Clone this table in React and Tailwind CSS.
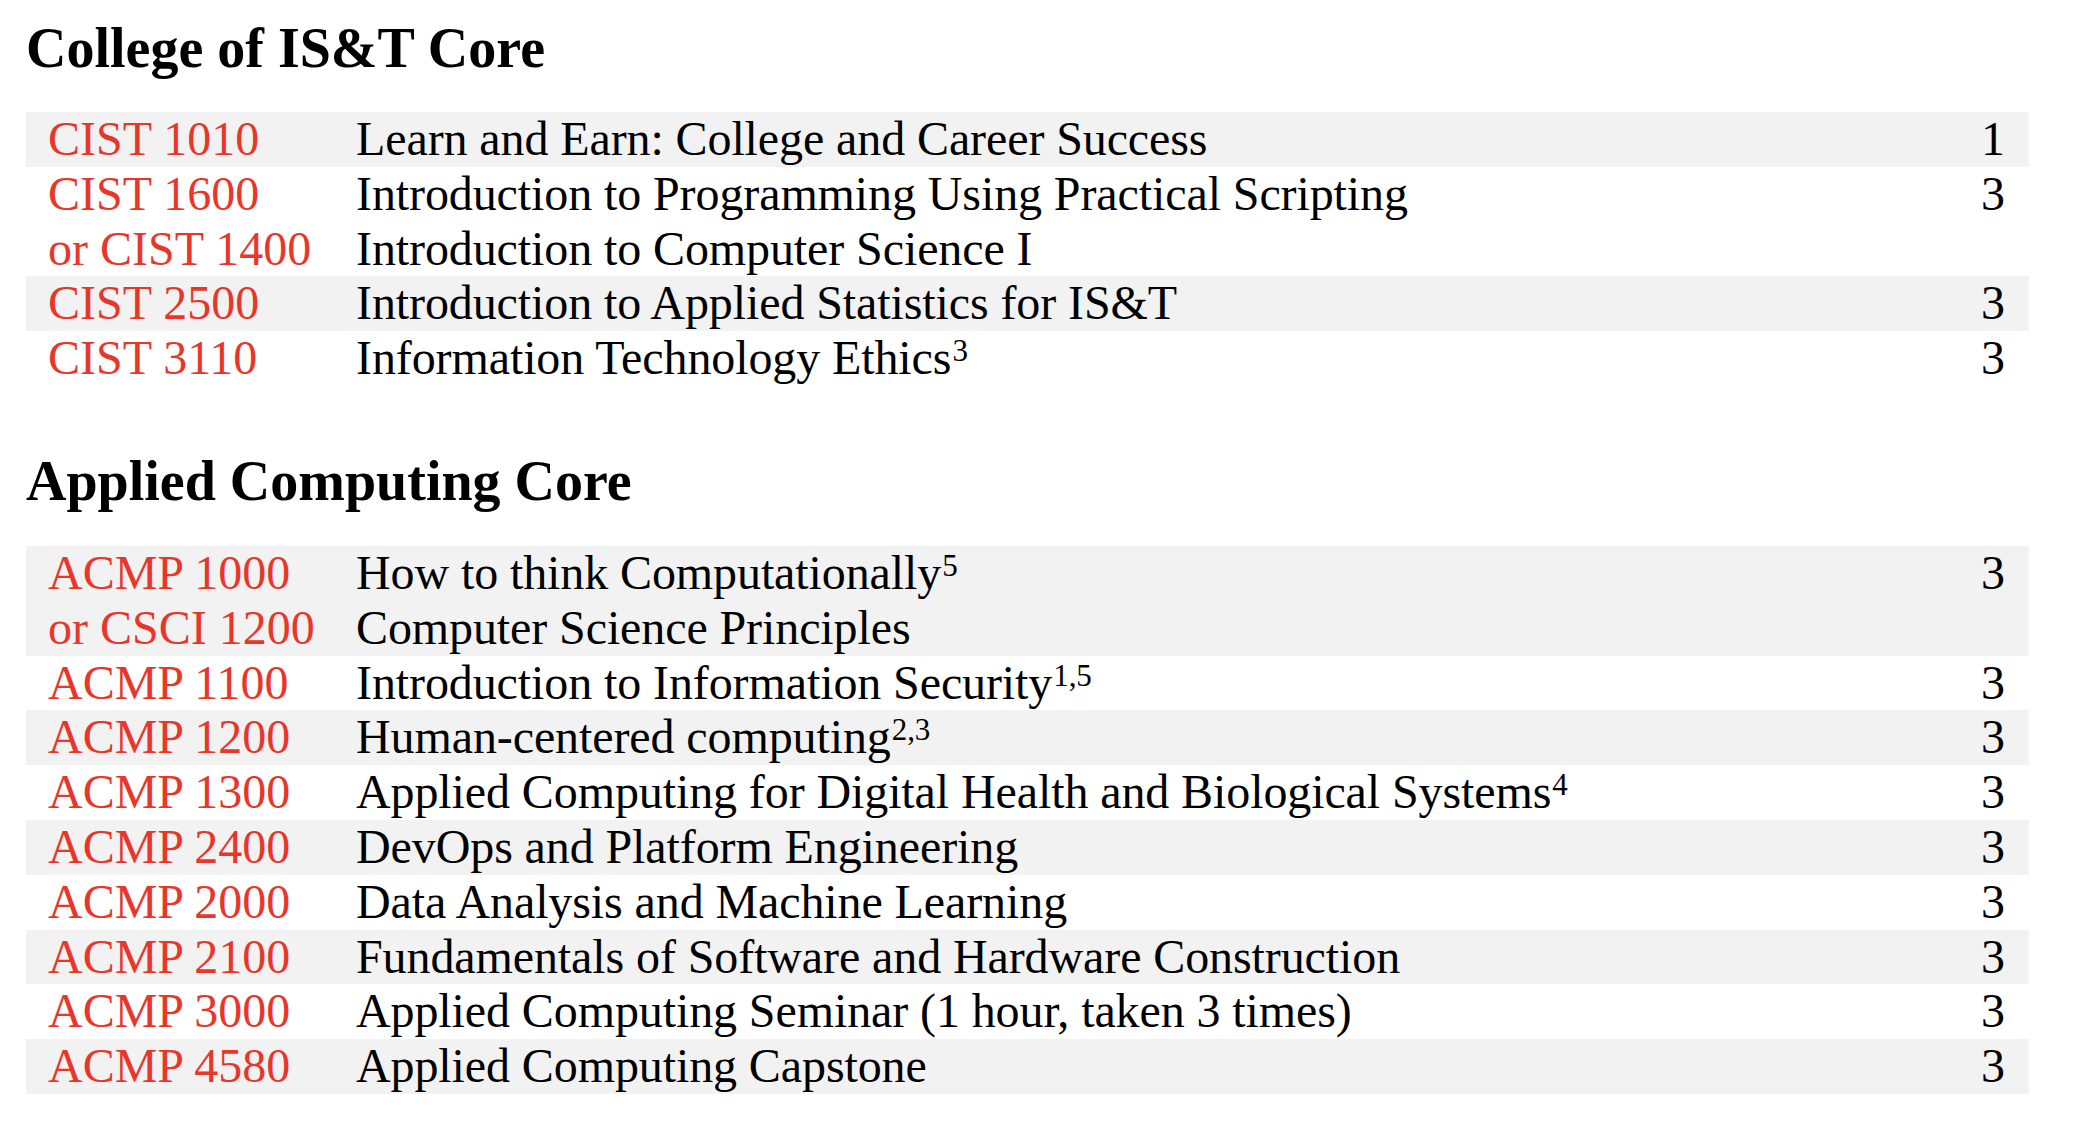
import React from 'react';

const istCore = [
    { rows: [{ code: 'CIST 1010', title: 'Learn and Earn: College and Career Success' }], credits: '1' },
    {
        rows: [
            { code: 'CIST 1600', title: 'Introduction to Programming Using Practical Scripting' },
            { code: 'or CIST 1400', title: 'Introduction to Computer Science I' },
        ],
        credits: '3',
    },
    { rows: [{ code: 'CIST 2500', title: 'Introduction to Applied Statistics for IS&T' }], credits: '3' },
    { rows: [{ code: 'CIST 3110', title: 'Information Technology Ethics', note: '3' }], credits: '3' },
];

const acmpCore = [
    {
        rows: [
            { code: 'ACMP 1000', title: 'How to think Computationally', note: '5' },
            { code: 'or CSCI 1200', title: 'Computer Science Principles' },
        ],
        credits: '3',
    },
    { rows: [{ code: 'ACMP 1100', title: 'Introduction to Information Security', note: '1,5' }], credits: '3' },
    { rows: [{ code: 'ACMP 1200', title: 'Human-centered computing', note: '2,3' }], credits: '3' },
    { rows: [{ code: 'ACMP 1300', title: 'Applied Computing for Digital Health and Biological Systems', note: '4' }], credits: '3' },
    { rows: [{ code: 'ACMP 2400', title: 'DevOps and Platform Engineering' }], credits: '3' },
    { rows: [{ code: 'ACMP 2000', title: 'Data Analysis and Machine Learning' }], credits: '3' },
    { rows: [{ code: 'ACMP 2100', title: 'Fundamentals of Software and Hardware Construction' }], credits: '3' },
    { rows: [{ code: 'ACMP 3000', title: 'Applied Computing Seminar (1 hour, taken 3 times)' }], credits: '3' },
    { rows: [{ code: 'ACMP 4580', title: 'Applied Computing Capstone' }], credits: '3' },
];

const CourseTable = ({ groups }) => (
    <div className="w-[2003px]">
        {groups.map((group, gi) => (
            <div key={gi} className={gi % 2 === 0 ? 'bg-[#f2f2f2]' : 'bg-white'}>
                {group.rows.map((row, ri) => (
                    <div
                        key={ri}
                        className="grid grid-cols-[308px_1fr_auto] pl-[22px] pr-[24px] text-[48px] leading-[54.8px]"
                    >
                        <span className="text-[#e8372a]">{row.code}</span>
                        <span className="text-black tracking-[-0.1px]">
                            {row.title}
                            {row.note && <sup className="text-[31px] -top-[13px] ml-[1px]">{row.note}</sup>}
                        </span>
                        <span className="text-black text-right">{ri === 0 ? group.credits : ''}</span>
                    </div>
                ))}
            </div>
        ))}
    </div>
);

const App = () => {
    return (
        <div className="min-h-screen bg-white pl-[26px] pt-[16px] font-['Liberation_Serif',serif]">
            {/* College core */}
            <h2 className="text-[56px] font-bold leading-[64px] text-black">College of IS&amp;T Core</h2>
            <div className="mt-[32px]">
                <CourseTable groups={istCore} />
            </div>

            {/* Applied computing core */}
            <h2 className="mt-[63px] text-[56px] font-bold leading-[64px] text-black">Applied Computing Core</h2>
            <div className="mt-[33px]">
                <CourseTable groups={acmpCore} />
            </div>
        </div>
    );
};

export default App;
